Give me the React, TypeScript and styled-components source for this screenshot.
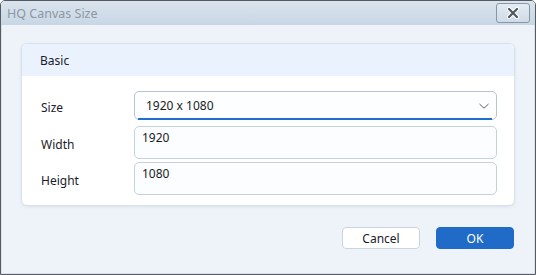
import React from 'react';
import styled, { createGlobalStyle } from 'styled-components';

const GlobalStyle = createGlobalStyle`
  html, body {
    margin: 0;
    padding: 0;
    background: #ffffff;
  }
  body {
    font-family: "Noto Sans", "Open Sans", sans-serif;
  }
`;

const Window = styled.div`
  width: 536px;
  height: 275px;
  box-sizing: border-box;
  display: flex;
  flex-direction: column;
  border: 1px solid #575b60;
  border-radius: 5px 5px 0 0;
  overflow: hidden;
  background: #eef3f9;
`;

const TitleBar = styled.div`
  height: 24px;
  flex-shrink: 0;
  display: flex;
  align-items: center;
  justify-content: space-between;
  padding: 0 5px 0 6px;
  background: linear-gradient(#dae4ee, #c8d6e4);
`;

const Title = styled.span`
  font-size: 12.5px;
  color: #8b97a3;
`;

const CloseButton = styled.div`
  width: 32px;
  height: 18px;
  display: flex;
  align-items: center;
  justify-content: center;
  border: 1px solid #8797a8;
  border-radius: 3px;
  background: linear-gradient(#e3ebf3, #cfdbe7);
`;

const Body = styled.div`
  flex: 1;
  display: flex;
  flex-direction: column;
  padding: 18px 19px 0 19px;
  border-left: 1px solid #d8e2ec;
  border-right: 1px solid #d8e2ec;
  border-bottom: 1px solid #d8e2ec;
`;

const Card = styled.div`
  background: #ffffff;
  border: 1px solid #d9e1ea;
  border-radius: 6px;
  box-shadow: 0 1px 3px rgba(60, 80, 110, 0.1);
  overflow: hidden;
`;

const CardHeader = styled.div`
  height: 32px;
  display: flex;
  align-items: center;
  padding-left: 18px;
  background: #eaf3fd;
  font-size: 12px;
  color: #1b1b2b;
`;

const Form = styled.div`
  display: grid;
  grid-template-columns: 93px 1fr;
  padding: 15px 17px 10px 19px;
`;

const Label = styled.div<{ $gap: number }>`
  display: flex;
  align-items: center;
  padding-top: 3px;
  font-size: 12px;
  color: #1b1b2b;
  margin-top: ${p => p.$gap}px;
`;

const Select = styled.div`
  position: relative;
  height: 29px;
  box-sizing: border-box;
  display: flex;
  align-items: center;
  justify-content: space-between;
  padding: 0 6px 0 11px;
  border: 1px solid #b7c3d1;
  border-radius: 5px;
  background: #fdfeff;
  font-size: 12px;
  color: #1b1b1b;

  &::after {
    content: '';
    position: absolute;
    left: 3px;
    right: 4px;
    bottom: -1px;
    height: 2px;
    background: #1e6fd0;
  }
`;

const Input = styled.div<{ $gap: number }>`
  height: 33px;
  box-sizing: border-box;
  padding: 2px 7px;
  margin-top: ${p => p.$gap}px;
  border: 1px solid #c6d1dd;
  border-radius: 5px;
  background: #fcfdff;
  font-size: 12px;
  color: #1b1b1b;
`;

const Footer = styled.div`
  display: flex;
  justify-content: flex-end;
  gap: 16px;
  padding: 21px 1px 0 0;
`;

const Button = styled.div<{ $primary?: boolean }>`
  width: 78px;
  height: 22px;
  box-sizing: border-box;
  display: flex;
  align-items: center;
  justify-content: center;
  border-radius: 4px;
  font-size: 12px;
  border: 1px solid ${p => (p.$primary ? '#1f6bc7' : '#cbd5e0')};
  background: ${p => (p.$primary ? '#1f6bc7' : '#ffffff')};
  color: ${p => (p.$primary ? '#ffffff' : '#1b1b2b')};
`;

const CloseIcon = () => (
  <svg width="16" height="12" viewBox="0 0 16 12">
    <path
      d="M4 2 L12 10 M12 2 L4 10"
      stroke="#ffffff"
      strokeWidth="4.2"
      strokeLinecap="round"
    />
    <path
      d="M4 2 L12 10 M12 2 L4 10"
      stroke="#4f5660"
      strokeWidth="2.2"
      strokeLinecap="round"
    />
  </svg>
);

const Chevron = () => (
  <svg width="12" height="8" viewBox="0 0 12 8">
    <path d="M1.5 2 L6 6.2 L10.5 2" fill="none" stroke="#4a4f58" strokeWidth="0.9" />
  </svg>
);

const App = () => (
  <>
    <GlobalStyle />
    <Window>
      <TitleBar>
        <Title>HQ Canvas Size</Title>
        <CloseButton>
          <CloseIcon />
        </CloseButton>
      </TitleBar>
      <Body>
        <Card>
          <CardHeader>Basic</CardHeader>
          <Form>
            <Label $gap={0}>Size</Label>
            <Select>
              <span>1920 x 1080</span>
              <Chevron />
            </Select>
            <Label $gap={6}>Width</Label>
            <Input $gap={6}>1920</Input>
            <Label $gap={3}>Height</Label>
            <Input $gap={3}>1080</Input>
          </Form>
        </Card>
        <Footer>
          <Button>Cancel</Button>
          <Button $primary>OK</Button>
        </Footer>
      </Body>
    </Window>
  </>
);

export default App;
